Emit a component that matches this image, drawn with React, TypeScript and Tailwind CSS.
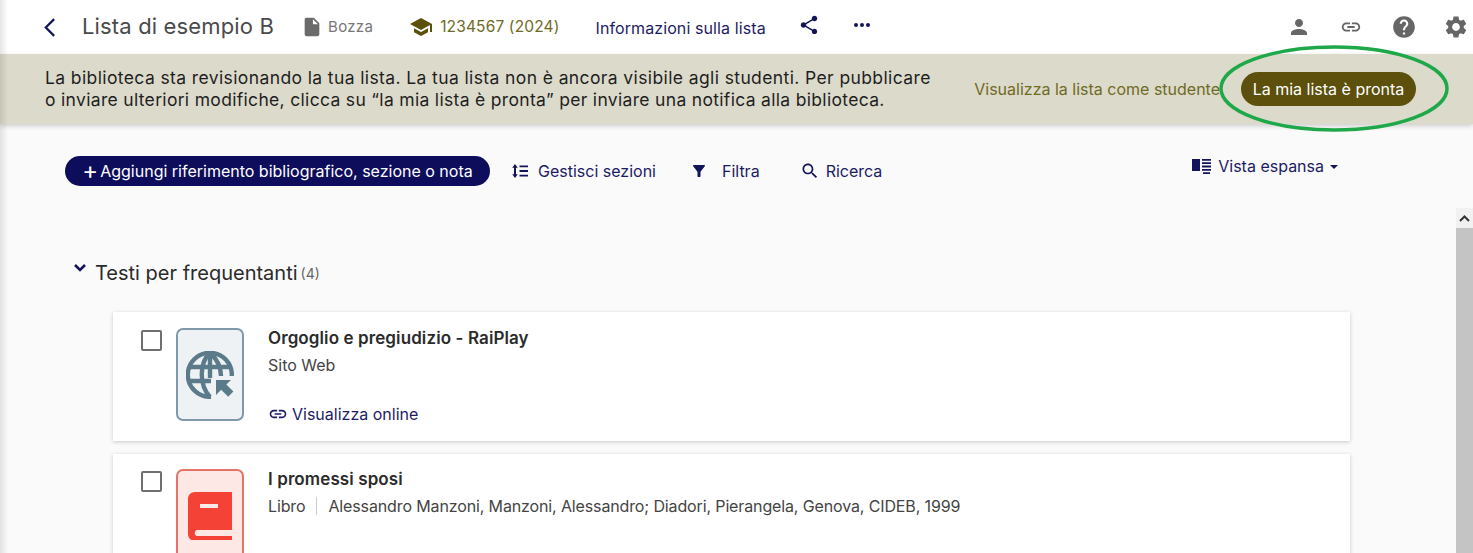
import type { ReactNode } from 'react'

type IconProps = { d: string; className?: string }

const Icon = ({ d, className }: IconProps) => (
  <svg viewBox="0 0 24 24" fill="currentColor" className={className}>
    <path d={d} />
  </svg>
)

const icons = {
  file: 'M6 2c-1.1 0-1.99.9-1.99 2L4 20c0 1.1.89 2 1.99 2H18c1.1 0 2-.9 2-2V8l-6-6H6zm7 7V3.5L18.5 9H13z',
  school: 'M5 13.18v4L12 21l7-3.82v-4L12 17l-7-3.82zM12 3L1 9l11 6 9-4.91V17h2V9L12 3z',
  share:
    'M18 16.08c-.76 0-1.44.3-1.96.77L8.91 12.7c.05-.23.09-.46.09-.7s-.04-.47-.09-.7l7.05-4.11c.54.5 1.25.81 2.04.81 1.66 0 3-1.34 3-3s-1.34-3-3-3-3 1.34-3 3c0 .24.04.47.09.7L8.04 9.81C7.5 9.31 6.79 9 6 9c-1.66 0-3 1.34-3 3s1.34 3 3 3c.79 0 1.5-.31 2.04-.81l7.12 4.16c-.05.21-.08.43-.08.65 0 1.61 1.31 2.92 2.92 2.92 1.61 0 2.92-1.31 2.92-2.92s-1.31-2.92-2.92-2.92z',
  person: 'M12 12c2.21 0 4-1.79 4-4s-1.79-4-4-4-4 1.79-4 4 1.79 4 4 4zm0 2c-2.67 0-8 1.34-8 4v2h16v-2c0-2.66-5.33-4-8-4z',
  link: 'M3.9 12c0-1.71 1.39-3.1 3.1-3.1h4V7H7c-2.76 0-5 2.24-5 5s2.24 5 5 5h4v-1.9H7c-1.71 0-3.1-1.39-3.1-3.1zM8 13h8v-2H8v2zm9-6h-4v1.9h4c1.71 0 3.1 1.39 3.1 3.1s-1.39 3.1-3.1 3.1h-4V17h4c2.76 0 5-2.24 5-5s-2.24-5-5-5z',
  help: 'M12 2C6.48 2 2 6.48 2 12s4.48 10 10 10 10-4.48 10-10S17.52 2 12 2zm1 17h-2v-2h2v2zm2.07-7.75l-.9.92C13.45 12.9 13 13.5 13 15h-2v-.5c0-1.1.45-2.1 1.17-2.83l1.24-1.26c.37-.36.59-.86.59-1.41 0-1.1-.9-2-2-2s-2 .9-2 2H8c0-2.21 1.79-4 4-4s4 1.79 4 4c0 .88-.36 1.68-.93 2.25z',
  settings:
    'M19.14 12.94c.04-.3.06-.61.06-.94 0-.32-.02-.64-.07-.94l2.03-1.58c.18-.14.23-.41.12-.61l-1.92-3.32c-.12-.22-.37-.29-.59-.22l-2.39.96c-.5-.38-1.03-.7-1.62-.94l-.36-2.54c-.04-.24-.24-.41-.48-.41h-3.84c-.24 0-.43.17-.47.41l-.36 2.54c-.59.24-1.13.57-1.62.94l-2.39-.96c-.22-.08-.47 0-.59.22L2.74 8.87c-.12.21-.08.47.12.61l2.03 1.58c-.05.3-.09.63-.09.94s.02.64.07.94l-2.03 1.58c-.18.14-.23.41-.12.61l1.92 3.32c.12.22.37.29.59.22l2.39-.96c.5.38 1.03.7 1.62.94l.36 2.54c.05.24.24.41.48.41h3.84c.24 0 .44-.17.47-.41l.36-2.54c.59-.24 1.13-.56 1.62-.94l2.39.96c.22.08.47 0 .59-.22l1.92-3.32c.12-.22.07-.47-.12-.61l-2.01-1.58zM12 15.6c-1.98 0-3.6-1.62-3.6-3.6s1.62-3.6 3.6-3.6 3.6 1.62 3.6 3.6-1.62 3.6-3.6 3.6z',
  filter: 'M4.25 5.61C6.27 8.2 10 13 10 13v6c0 .55.45 1 1 1h2c.55 0 1-.45 1-1v-6s3.72-4.8 5.74-7.39c.51-.66.04-1.61-.79-1.61H5.04c-.83 0-1.3.95-.79 1.61z',
  search:
    'M15.5 14h-.79l-.28-.27C15.41 12.59 16 11.11 16 9.5 16 5.91 13.09 3 9.5 3S3 5.91 3 9.5 5.91 16 9.5 16c1.61 0 3.09-.59 4.23-1.57l.27.28v.79l5 4.99L20.49 19l-4.99-5zm-6 0C7.01 14 5 11.99 5 9.5S7.01 5 9.5 5 14 7.01 14 9.5 11.99 14 9.5 14z'
}

const GlobeIcon = () => (
  <svg viewBox="0 0 48 48" className="w-[48px] h-[48px] text-[#5b7a8a]" fill="none" stroke="currentColor" strokeWidth="4.4">
    <path d="M25 45.8A22 22 0 1 1 45.8 25" />
    <path d="M24 2C13 12 13 34 24 46" />
    <path d="M24 2C33 10 35 18 35 25" />
    <path d="M24 2v25" />
    <path d="M4 16h40M3 30h22" />
    <path d="M30 29h15l-4.6 4.6 7 7-5.2 5.2-7-7L30 44z" fill="currentColor" stroke="none" />
  </svg>
)

const SortListIcon = () => (
  <svg viewBox="0 0 16 14" className="w-[16px] h-[14px] text-[#14145a]" fill="currentColor">
    <path d="M3 0l2.8 3.8H.2zM3 14L.2 10.2h5.6zM2 3h2v8H2z" />
    <path d="M7.5 1.4H16v1.8H7.5zM7.5 6.1H16v1.8H7.5zM7.5 10.8H16v1.8H7.5z" />
  </svg>
)

const ViewIcon = () => (
  <svg viewBox="0 0 20 18" className="w-[20px] h-[18px] text-[#14145a]" fill="currentColor">
    <path d="M0 2h8v12H0z" />
    <path d="M10 2h9v1.8h-9zM10 5.3h9v1.8h-9zM10 8.6h9v1.8h-9zM10 11.9h9v1.8h-9zM11 15.2h7v1.8h-7z" />
  </svg>
)

const BookIcon = () => (
  <svg viewBox="0 0 44 48" className="w-[44px] h-[48px] text-[#f44336]" fill="currentColor">
    <path d="M7 0h37v38H9c-3 0-3 6 0 6h35v5H7c-4 0-7-3-7-7V7c0-4 3-7 7-7z" />
    <path d="M12 12h18v4H12z" fill="#fde8e6" />
  </svg>
)

const Check = () => <span className="w-[21px] h-[21px] mt-[2px] shrink-0 border-2 border-[#6f6f6f] rounded-[2px] bg-white" />

const ToolbarLink = ({ children, className }: { children: ReactNode; className?: string }) => (
  <span className={`flex items-center text-[16px] text-[#1c1c64] ${className ?? ''}`}>{children}</span>
)

export default function App() {
  return (
    <div className="relative h-[553px] overflow-hidden bg-[#fafafa] font-['Inter','Liberation_Sans',sans-serif] text-[#2b2b2b]">
      <header className="h-[54px] bg-white flex items-center pl-[43px] pr-[4px]">
        <svg viewBox="0 0 14 22" className="w-[13px] h-[21px] text-[#14145a]" fill="none" stroke="currentColor" strokeWidth="2.4">
          <path d="M12 2L3 11l9 9" />
        </svg>
        <h1 className="ml-[26px] -mt-[2px] text-[22px] tracking-[0.15px] font-normal text-[#4a4a4a]">Lista di esempio B</h1>
        <Icon d={icons.file} className="ml-[27px] w-[22px] h-[22px] text-[#6b6b6b]" />
        <span className="ml-[5px] text-[15px] tracking-[0.3px] text-[#777777]">Bozza</span>
        <Icon d={icons.school} className="ml-[36px] w-[24px] h-[24px] text-[#5c500c]" />
        <span className="ml-[7px] text-[15.5px] tracking-[0.15px] text-[#6f6a24]">1234567 (2024)</span>
        <span className="ml-[36px] mt-[1px] text-[16px] tracking-[0.1px] text-[#1c1c64]">Informazioni sulla lista</span>
        <Icon d={icons.share} className="ml-[32px] w-[22px] h-[22px] -mt-[4px] text-[#14145a]" />
        <span className="ml-[34px] -mt-[4px] flex gap-[2px]">
          <i className="w-[4px] h-[4px] rounded-full bg-[#14145a]" />
          <i className="w-[4px] h-[4px] rounded-full bg-[#14145a]" />
          <i className="w-[4px] h-[4px] rounded-full bg-[#14145a]" />
        </span>
        <div className="ml-auto flex items-center text-[#666666]">
          <Icon d={icons.person} className="w-[24px] h-[24px]" />
          <Icon d={icons.link} className="ml-[29px] w-[22px] h-[22px]" />
          <Icon d={icons.help} className="ml-[29px] w-[26px] h-[26px]" />
          <Icon d={icons.settings} className="ml-[26px] w-[26px] h-[26px]" />
        </div>
      </header>

      <section className="h-[70px] bg-[#dcdacb] flex items-center pl-[45px] pr-[57px] shadow-[0_2px_5px_rgba(0,0,0,0.18)]">
        <p className="text-[17.5px] leading-[22px] text-[#1f1f1f] tracking-[0.39px] w-[900px] whitespace-nowrap">
          La biblioteca sta revisionando la tua lista. La tua lista non è ancora visibile agli studenti. Per pubblicare
          <br />
          <span className="tracking-[0.32px]">o inviare ulteriori modifiche, clicca su “la mia lista è pronta” per inviare una notifica alla biblioteca.</span>
        </p>
        <span className="ml-auto text-[16px] text-[#6f6a24] whitespace-nowrap">Visualizza la lista come studente</span>
        <button className="ml-[21px] h-[34px] w-[175px] rounded-full bg-[#5c500c] text-white text-[16px] shrink-0">La mia lista è pronta</button>
      </section>

      <main className="pl-[65px] pr-[135px]">
        <div className="pt-[32px] flex items-center">
          <button className="h-[30px] w-[425px] rounded-full bg-[#0d0d5c] text-white text-[16px] flex items-center justify-center gap-[2px]">
            <span className="text-[24px] leading-none">+</span> Aggiungi riferimento bibliografico, sezione o nota
          </button>
          <ToolbarLink className="ml-[22px]">
            <SortListIcon />
            <span className="ml-[10px]">Gestisci sezioni</span>
          </ToolbarLink>
          <ToolbarLink className="ml-[34px]">
            <Icon d={icons.filter} className="w-[18px] h-[18px] text-[#14145a]" />
            <span className="ml-[14px]">Filtra</span>
          </ToolbarLink>
          <ToolbarLink className="ml-[40px]">
            <Icon d={icons.search} className="w-[20px] h-[20px] text-[#14145a]" />
            <span className="ml-[6px]">Ricerca</span>
          </ToolbarLink>
          <ToolbarLink className="ml-auto -mt-[10px]">
            <ViewIcon />
            <span className="ml-[6px]">Vista espansa</span>
            <i className="ml-[6px] mt-[2px] border-x-[4px] border-t-[4px] border-x-transparent border-t-[#14145a]" />
          </ToolbarLink>
        </div>

        <div className="mt-[72px] ml-[8px] flex items-center">
          <svg viewBox="0 0 14 10" className="w-[14px] h-[10px] -mt-[10px] text-[#14145a]" fill="none" stroke="currentColor" strokeWidth="2.6">
            <path d="M2 2l5 5 5-5" />
          </svg>
          <h2 className="ml-[8px] text-[20px] font-normal">Testi per frequentanti</h2>
          <span className="ml-[3px] text-[14px] text-[#666666]">(4)</span>
        </div>

        <article className="ml-[48px] -mr-[12px] mt-[24px] h-[129px] bg-white shadow-[0_1px_4px_rgba(0,0,0,0.2)] flex pl-[28px] pt-[16px]">
          <Check />
          <div className="ml-[14px] w-[68px] h-[93px] rounded-[7px] border-2 border-[#7f99a8] bg-[#eef2f4] flex items-center justify-center">
            <GlobeIcon />
          </div>
          <div className="ml-[24px]">
            <h3 className="text-[17px] tracking-[0.1px] leading-[20px] font-semibold">Orgoglio e pregiudizio - RaiPlay</h3>
            <p className="mt-[7px] text-[16px] leading-[20px] text-[#444444]">Sito Web</p>
            <p className="mt-[29px] flex items-center text-[16px] leading-[20px] text-[#1c1c64]">
              <Icon d={icons.link} className="w-[20px] h-[20px]" />
              <span className="ml-[4px]">Visualizza online</span>
            </p>
          </div>
        </article>

        <article className="ml-[48px] -mr-[12px] mt-[13px] h-[129px] bg-white shadow-[0_1px_4px_rgba(0,0,0,0.2)] flex pl-[28px] pt-[15px]">
          <Check />
          <div className="ml-[14px] w-[68px] h-[93px] rounded-[7px] border-2 border-[#e57368] bg-[#fde8e6] flex justify-center pt-[21px]">
            <BookIcon />
          </div>
          <div className="ml-[24px]">
            <h3 className="text-[17px] tracking-[0.1px] leading-[20px] font-semibold">I promessi sposi</h3>
            <p className="mt-[7px] text-[16px] leading-[20px] tracking-[-0.13px] text-[#444444] flex items-center">
              Libro
              <i className="ml-[11px] mr-[11px] w-px h-[18px] bg-[#cccccc]" />
              Alessandro Manzoni, Manzoni, Alessandro; Diadori, Pierangela, Genova, CIDEB, 1999
            </p>
          </div>
        </article>
      </main>

      {/* scrollbar */}
      <div className="absolute right-0 top-[208px] bottom-0 w-[17px] bg-[#f1f1f1] flex flex-col">
        <svg viewBox="0 0 17 20" className="w-[17px] h-[20px] text-[#333333]" fill="none" stroke="currentColor" strokeWidth="2">
          <path d="M4 13l4.5-4.5L13 13" />
        </svg>
        <div className="flex-1 bg-[#c4c4c4]" />
      </div>

      {/* green hand-drawn ellipse */}
      <svg viewBox="0 0 1473 553" className="absolute inset-0 w-[1473px] h-[553px] pointer-events-none" fill="none">
        <ellipse cx="1334" cy="88.5" rx="113" ry="41.5" stroke="#1fa84a" strokeWidth="3.5" />
      </svg>

      {/* left edge shade */}
      <div className="absolute left-0 top-0 bottom-0 w-[8px] bg-gradient-to-r from-black/10 to-transparent" />
    </div>
  )
}
